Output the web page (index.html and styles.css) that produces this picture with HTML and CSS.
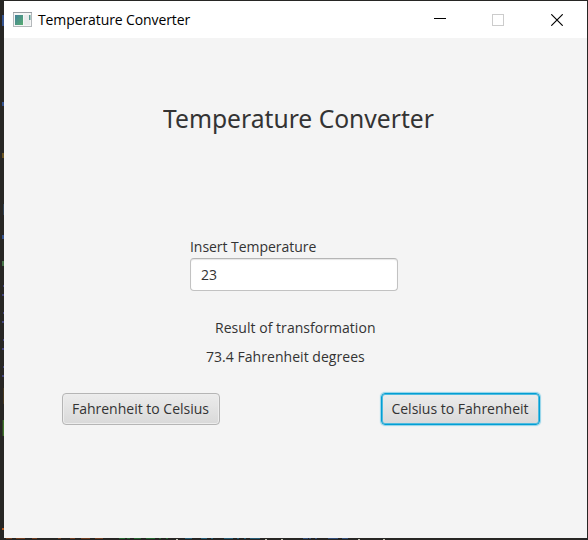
FILE: index.html
```
<!DOCTYPE html>
<html lang="en">
<head>
<meta charset="utf-8">
<title>Temperature Converter</title>
<link rel="stylesheet" href="styles.css">
</head>
<body>
<svg class="backdrop" width="588" height="540" shape-rendering="crispEdges" aria-hidden="true">
  <g fill="#35538f"><path d="M2 15h2v11h-2zM2 102h2v4h-2zM2 235h2v4h-2z"/></g>
  <path fill="#6b5420" d="M2 153h2v5h-2z"/>
  <path fill="#304153" d="M3 204h1v11h-1z"/>
  <path fill="#467348" d="M2 261h2v5h-2z"/>
  <path fill="#42447d" d="M2 294h2v2h-2zM3 285h1v2h-1zM2 321h2v2h-2zM3 312h1v2h-1zM2 348h2v2h-2zM3 339h1v2h-1zM2 375h2v2h-2zM3 366h1v2h-1z"/>
  <path fill="#463820" d="M3 388h1v16h-1z"/>
  <path fill="#2f4426" d="M2 420h1v16h-1z"/>
  <path fill="#41752d" d="M3 420h1v16h-1z"/>
  <path fill="#b45b20" d="M2 528h2v2h-2z"/>
  <path fill="#713d1f" d="M6 538h6v1h-6zM16 538h9v1h-9zM32 538h5v1h-5zM58 538h3v1h-3zM70 538h5v1h-5zM81 538h9v1h-9zM95 538h8v1h-8z"/>
  <path fill="#24662f" d="M119 538h6v1h-6zM127 538h3v1h-3zM134 538h7v1h-7zM146 538h9v1h-9zM159 538h2v1h-2zM166 538h2v1h-2z"/>
  <path fill="#245b75" d="M185 538h7v1h-7zM201 538h6v1h-6zM211 538h2v1h-2zM224 538h9v1h-9zM237 538h2v1h-2zM244 538h2v1h-2zM250 538h10v1h-10z"/>
  <path fill="#324d79" d="M303 538h5v1h-5zM309 538h2v1h-2zM315 538h2v1h-2zM328 538h10v1h-10zM342 538h6v1h-6z"/>
  <path fill="#c4c1b1" d="M176 539h2v1h-2zM265 539h2v1h-2zM281 539h2v1h-2zM358 539h2v1h-2zM383 539h2v1h-2z"/>
</svg>
<main class="window">
  <header class="titlebar">
    <svg class="app-icon" width="19" height="15" viewBox="0 0 19 15" aria-hidden="true">
      <defs><linearGradient id="pane" x1="0" y1="0" x2="1" y2="1"><stop stop-color="#43819a"/><stop offset="1" stop-color="#57ad70"/></linearGradient></defs>
      <rect x=".5" y=".5" width="18" height="14" fill="#f5f6f6" stroke="#b4b8bb"/>
      <path d="M0 .5h19" stroke="#989ea3"/>
      <rect x="2" y="3" width="8" height="10" fill="url(#pane)"/>
      <rect x="11" y="3" width="6" height="10" fill="#e9ebec"/>
      <rect x="16" y="3" width="1.5" height="5" fill="#5b9b91"/>
    </svg>
    <span class="caption">Temperature Converter</span>
    <div class="controls">
      <svg class="minimize" width="12" height="12" shape-rendering="crispEdges"><path d="M0 4.5h12" stroke="#000"/></svg>
      <svg class="maximize" width="12" height="12"><rect x=".5" y=".5" width="11" height="11" fill="none" stroke="#ccc"/></svg>
      <svg width="12" height="12"><path d="M.3.3l11.4 11.4M11.7.3L.3 11.7" stroke="#000" stroke-width="1.15"/></svg>
    </div>
  </header>
  <section class="content">
    <h1 class="heading">Temperature Converter</h1>
    <label class="field-label" for="temp">Insert Temperature</label>
    <input class="field" id="temp" type="text" value="23">
    <div class="result-label">Result of transformation</div>
    <div class="result">73.4 Fahrenheit degrees</div>
    <div class="actions">
      <button class="button" type="button">Fahrenheit to Celsius</button>
      <button class="button focused" type="button">Celsius to Fahrenheit</button>
    </div>
  </section>
</main>
</body>
</html>
```
FILE: styles.css
```
* { box-sizing: border-box; }
html, body { margin: 0; width: 588px; height: 540px; overflow: hidden; }
body {
  background: #272624;
  padding: 1px 1px 2px 4px;
  font-family: "Open Sans", "Noto Sans", sans-serif;
  font-size: 14px;
  color: #333;
}
.backdrop { position: absolute; left: 0; top: 0; }
.window { position: relative; width: 583px; height: 537px; background: #f4f4f4; }
.titlebar { height: 37px; background: #fff; display: flex; align-items: center; padding: 0 24px 0 9px; }
.app-icon { margin-right: 6px; }
.caption { color: #000; letter-spacing: -0.1px; }
.controls { margin-left: auto; display: flex; }
.controls svg { display: block; }
.minimize { margin-right: 46px; }
.maximize { margin-right: 47px; }
.content { display: flex; flex-direction: column; align-items: flex-start; white-space: nowrap; }
.heading { margin: 61px 0 0 159px; font-family: "Noto Sans", sans-serif; font-size: 26px; line-height: 38px; font-weight: 400; transform: scaleX(0.948); transform-origin: left; }
.field-label { margin: 100px 0 0 186px; line-height: 20px; letter-spacing: -0.04px; }
.field {
  margin: 1px 0 0 186px; width: 208px; height: 33px; padding: 0 10px;
  border: 1px solid #c2c2c2; border-top-color: #b5b5b5; border-radius: 4px;
  background: #fff; box-shadow: inset 0 1px 1px #e6e6e6;
  font: inherit; color: inherit; outline: none;
}
.result-label { margin: 27px 0 0 211px; line-height: 20px; letter-spacing: 0.04px; }
.result { margin: 9px 0 0 202px; line-height: 20px; letter-spacing: 0.04px; }
.actions { display: flex; gap: 161px; margin: 26px 0 0 58px; }
.button {
  width: 158px; height: 32px; padding: 0 1px 2px 0; border: 1px solid #b5b5b5; border-radius: 4px;
  background: linear-gradient(#ececec, #d9d9d9); box-shadow: inset 0 0 0 1px #ededed;
  font: inherit; color: inherit;
}
.focused { width: 159px; border: 1px solid #039ed3; box-shadow: 0 0 1px 1px #8fd3e9, inset 0 0 0 1px #4dbbe0; }
```
